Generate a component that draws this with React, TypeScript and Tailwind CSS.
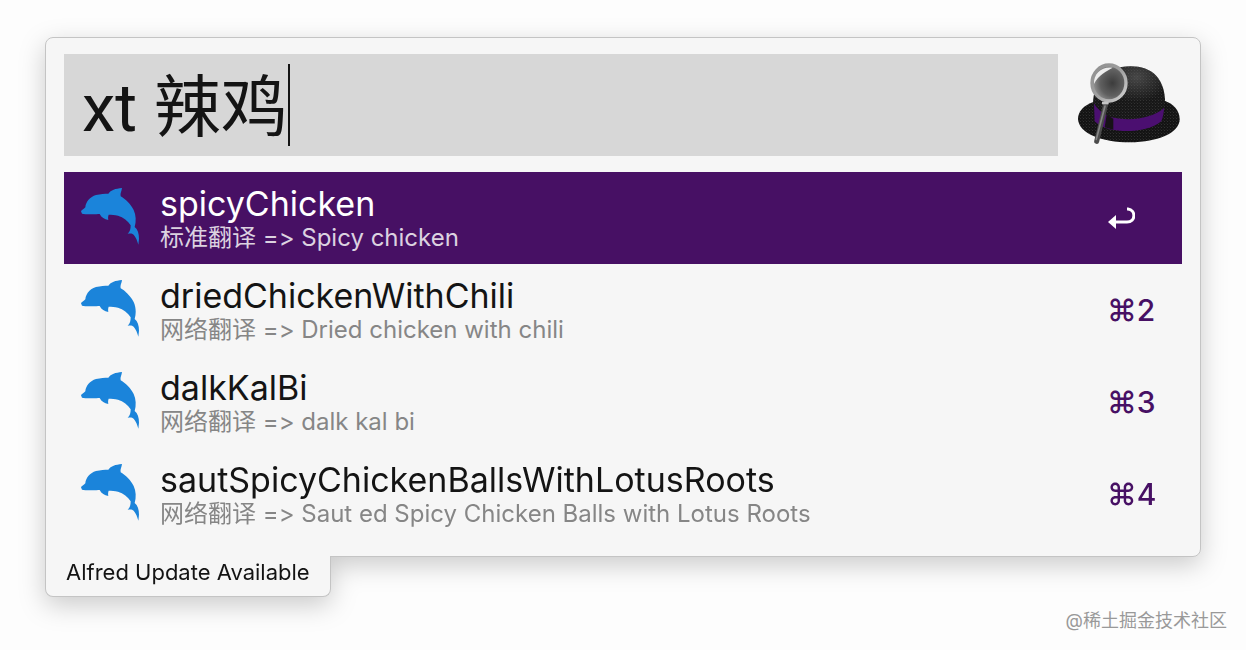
import { useState } from "react";

type Result = {
  title: string;
  source: string;
  text: string;
};

const results: Result[] = [
  { title: "spicyChicken", source: "标准翻译", text: "Spicy chicken" },
  { title: "driedChickenWithChili", source: "网络翻译", text: "Dried chicken with chili" },
  { title: "dalkKalBi", source: "网络翻译", text: "dalk kal bi" },
  {
    title: "sautSpicyChickenBallsWithLotusRoots",
    source: "网络翻译",
    text: "Saut ed Spicy Chicken Balls with Lotus Roots",
  },
];

const brim =
  "M60 131 C28 142 12 160 12 183 C14 226 82 253 168 253 C252 253 317 224 317 184 C317 157 299 138 272 128 Z";
const crown = "M58 150 C52 82 92 25 170 25 C232 25 280 60 273 154 C240 194 118 205 58 160 Z";

function Dolphin() {
  return (
    <svg viewBox="0 0 210 198" className="h-[66px] w-[70px] shrink-0" fill="#1b84da" aria-hidden="true">
      <path d="M15 82 C17 77 23 77 28 70 C29 54 42 38 60 33 C74 30 86 29 97 29 C105 18 118 14 138 12 C137 22 132 27 134 37 C150 46 165 62 173 78 C180 94 181 112 176 129 C185 136 189 148 189 164 L187 182 C184 170 180 160 173 152 C168 147 162 148 155 149 C162 143 164 134 164 124 C156 110 142 100 126 95 C116 92 107 92 98 92 C96 97 96 102 97 108 C85 106 77 101 71 90 C60 91 40 90 28 91 L18 89 Z" />
    </svg>
  );
}

function HatIcon() {
  return (
    <svg viewBox="0 3 324 276" className="h-23 w-27 shrink-0" aria-hidden="true">
      <defs>
        <pattern id="felt" width="9" height="9" patternUnits="userSpaceOnUse">
          <circle cx="2" cy="2" r="1.3" fill="#5a5a5a" />
          <circle cx="6.5" cy="6.5" r="1.1" fill="#444" />
        </pattern>
        <radialGradient id="shine" cx="0.6" cy="0.2" r="0.45">
          <stop offset="0" stopColor="#666" stopOpacity="0.6" />
          <stop offset="1" stopColor="#666" stopOpacity="0" />
        </radialGradient>
        <radialGradient id="lens" cx="0.6" cy="0.5" r="0.6">
          <stop offset="0" stopColor="#3c3c3c" />
          <stop offset="0.6" stopColor="#606060" />
          <stop offset="1" stopColor="#9a9a9a" />
        </radialGradient>
        <linearGradient id="rim" x1="0" y1="0" x2="1" y2="1">
          <stop offset="0" stopColor="#8e8e8e" />
          <stop offset="0.5" stopColor="#a0a0a0" />
          <stop offset="1" stopColor="#d2d2d2" />
        </linearGradient>
      </defs>
      <path d={brim} fill="#131313" />
      <path d={brim} fill="url(#felt)" />
      <path d={crown} fill="#171717" />
      <path d={crown} fill="url(#felt)" />
      <path d={crown} fill="url(#shine)" />
      <path
        d="M60 136 C70 154 86 166 106 176 C164 192 234 182 271 149 C269 163 267 178 262 190 C224 222 152 224 108 214 C88 209 72 201 62 190 Z"
        fill="#4b0f70"
      />
      <path d="M98 170 L118 182 L118 215 L92 208 Z" fill="#171217" />
      <path d="M95 138 L68 250" stroke="#4b4b4b" strokeWidth="15" strokeLinecap="round" />
      <path d="M93 144 L67 244" stroke="#858585" strokeWidth="5" strokeLinecap="round" />
      <ellipse cx="105" cy="75" rx="51" ry="54" fill="url(#lens)" stroke="url(#rim)" strokeWidth="10" />
      <path d="M60 78 C58 46 84 24 116 29 C98 40 74 50 60 78 Z" fill="#ededed" />
      <path d="M84 135 H104" stroke="#c4c4c4" strokeWidth="8" />
    </svg>
  );
}

function ReturnIcon() {
  return (
    <svg viewBox="0 0 28 22" className="h-[22px] w-7" role="img" aria-label="Return">
      <path d="M20 2 H21 C29 3 29 15 20 15 H8" fill="none" stroke="white" strokeWidth="3" />
      <path d="M1 15 L9 8 V22 Z" fill="white" />
    </svg>
  );
}

export default function App() {
  const [query, setQuery] = useState("xt 辣鸡");
  const [active, setActive] = useState(0);

  return (
    <main className="flex min-h-screen flex-col bg-[#fdfdfd] px-[45px] pt-[37px] font-['Inter','Noto_Sans_CJK_SC',sans-serif] text-[#141414]">
      <div className="drop-shadow-[0_8px_13px_rgba(0,0,0,0.2)]">
        <section className="rounded-t-lg rounded-br-lg border border-[#c4c4c4] bg-[#f6f6f6] px-[18px] py-4">
          <div className="flex items-center gap-4">
            <label className="flex h-[102px] min-w-0 flex-1 items-center bg-[#d7d7d7] pl-[18px]">
              <input
                aria-label="Search"
                value={query}
                onChange={(event) => setQuery(event.target.value)}
                className="field-sizing-content h-full bg-transparent pb-2 font-['Roboto','Noto_Sans_CJK_SC',sans-serif] text-[67px] outline-none"
              />
              <span className="h-[82px] w-0.5 bg-[#141414]" />
            </label>
            <HatIcon />
          </div>

          <ul className="mt-4">
            {results.map((result, index) => (
              <li key={result.title}>
                <button
                  onClick={() => setActive(index)}
                  className={`flex h-[92px] w-full items-center gap-3.5 pr-[27px] pb-0.5 pl-3 text-left ${
                    index === active ? "bg-[#471064] text-white" : ""
                  }`}
                >
                  <Dolphin />
                  <span className="min-w-0 flex-1 pt-1.5">
                    <span className="block text-[34px] leading-9">{result.title}</span>
                    <span
                      className={`block text-2xl leading-8 [font-feature-settings:'calt'_0] ${
                        index === active ? "text-[#dcd2e0]" : "text-[#868686]"
                      }`}
                    >
                      {result.source} =&gt; {result.text}
                    </span>
                  </span>
                  <span className="flex w-12 pt-0.5 text-3xl font-medium text-[#471064]">
                    {index === active ? <ReturnIcon /> : `⌘${index + 1}`}
                  </span>
                </button>
              </li>
            ))}
          </ul>
        </section>

        <button className="-mt-px block h-[41px] rounded-b-lg border border-t-0 border-[#c4c4c4] bg-[#f6f6f6] px-5 pb-2 text-[22px]">
          Alfred Update Available
        </button>
      </div>

      <footer className="mt-2.5 -mr-6.5 text-right text-lg text-[#999]">@稀土掘金技术社区</footer>
    </main>
  );
}
